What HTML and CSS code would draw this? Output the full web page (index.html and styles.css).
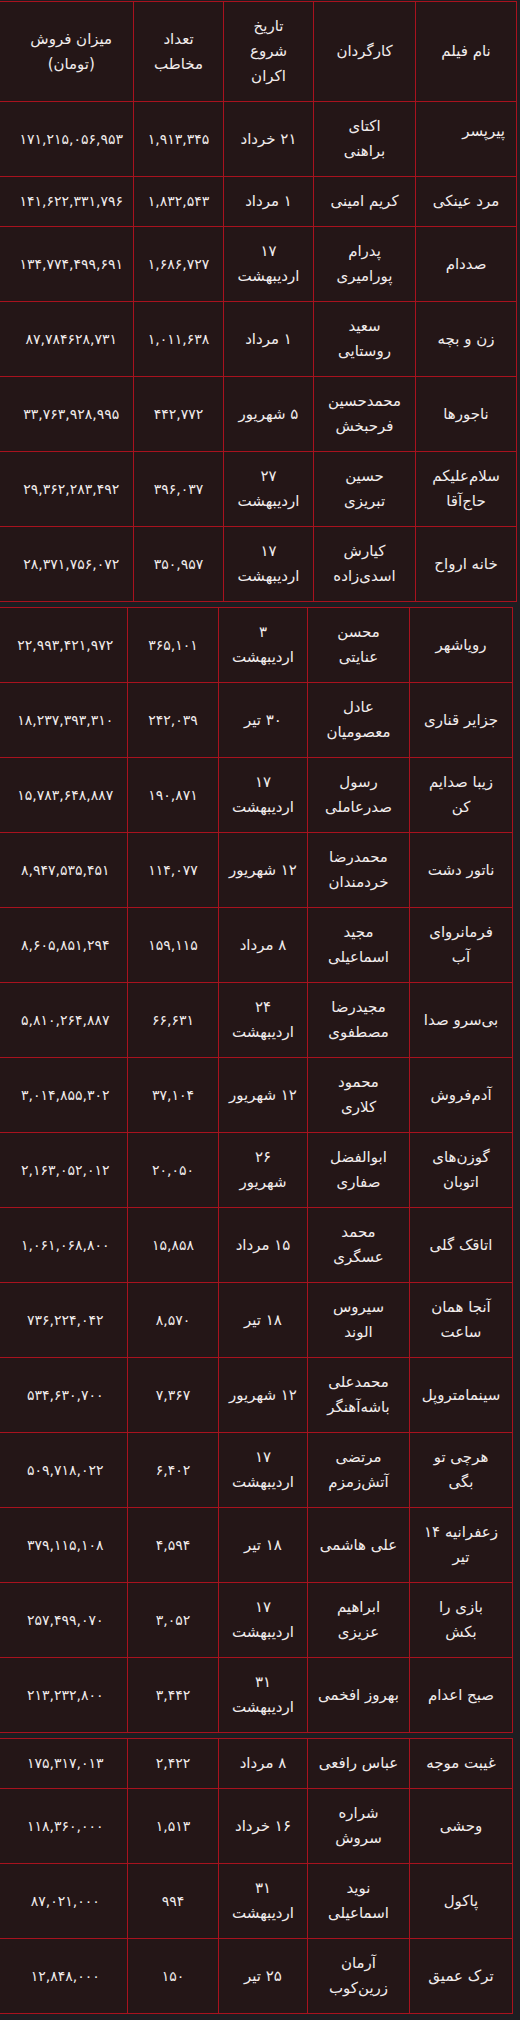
FILE: index.html
```html
<!DOCTYPE html>
<html lang="fa" dir="rtl">
<head>
<meta charset="utf-8">
<title>فروش فیلم‌ها</title>
<link rel="stylesheet" href="styles.css">
</head>
<body>
<div class="page">
  <table class="grid grid-first">
    <colgroup>
      <col class="c-name-a"><col class="c-dir"><col class="c-date-a"><col class="c-aud-a"><col class="c-sale-a">
    </colgroup>
    <tr class="head">
      <td>نام فیلم</td><td>کارگردان</td><td>تاریخ<br>شروع<br>اکران</td><td>تعداد<br>مخاطب</td><td class="sale">میزان فروش<br>(تومان)</td>
    </tr>
    <tr><td class="name-top">پیرپسر</td><td>اکتای<br>براهنی</td><td>۲۱ خرداد</td><td>۱,۹۱۳,۳۴۵</td><td class="sale">۱۷۱,۲۱۵,۰۵۶,۹۵۳</td></tr>
    <tr><td>مرد عینکی</td><td>کریم امینی</td><td>۱ مرداد</td><td>۱,۸۳۲,۵۴۳</td><td class="sale">۱۴۱,۶۲۲,۳۳۱,۷۹۶</td></tr>
    <tr><td>صددام</td><td>پدرام<br>پورامیری</td><td>۱۷<br>اردیبهشت</td><td>۱,۶۸۶,۷۲۷</td><td class="sale">۱۳۴,۷۷۴,۴۹۹,۶۹۱</td></tr>
    <tr><td>زن و بچه</td><td>سعید<br>روستایی</td><td>۱ مرداد</td><td>۱,۰۱۱,۶۳۸</td><td class="sale">۸۷,۷۸۴۶۲۸,۷۳۱</td></tr>
    <tr><td>ناجورها</td><td>محمدحسین<br>فرحبخش</td><td>۵ شهریور</td><td>۴۴۲,۷۷۲</td><td class="sale">۳۳,۷۶۳,۹۲۸,۹۹۵</td></tr>
    <tr><td>سلام‌علیکم<br>حاج‌آقا</td><td>حسین<br>تبریزی</td><td>۲۷<br>اردیبهشت</td><td>۳۹۶,۰۳۷</td><td class="sale">۲۹,۳۶۲,۲۸۳,۴۹۲</td></tr>
    <tr><td>خانه ارواح</td><td>کیارش<br>اسدی‌زاده</td><td>۱۷<br>اردیبهشت</td><td>۳۵۰,۹۵۷</td><td class="sale">۲۸,۳۷۱,۷۵۶,۰۷۲</td></tr>
  </table>

  <table class="grid grid-next">
    <colgroup>
      <col class="c-name-b"><col class="c-dir"><col class="c-date-b"><col class="c-aud-b"><col class="c-sale-b">
    </colgroup>
    <tr><td>رویاشهر</td><td>محسن<br>عنایتی</td><td>۳<br>اردیبهشت</td><td>۳۶۵,۱۰۱</td><td class="sale">۲۲,۹۹۳,۴۲۱,۹۷۲</td></tr>
    <tr><td>جزایر قناری</td><td>عادل<br>معصومیان</td><td>۳۰ تیر</td><td>۲۴۲,۰۳۹</td><td class="sale">۱۸,۲۳۷,۳۹۳,۳۱۰</td></tr>
    <tr><td>زیبا صدایم<br>کن</td><td>رسول<br>صدرعاملی</td><td>۱۷<br>اردیبهشت</td><td>۱۹۰,۸۷۱</td><td class="sale">۱۵,۷۸۳,۶۴۸,۸۸۷</td></tr>
    <tr><td>ناتور دشت</td><td>محمدرضا<br>خردمندان</td><td>۱۲ شهریور</td><td>۱۱۴,۰۷۷</td><td class="sale">۸,۹۴۷,۵۳۵,۴۵۱</td></tr>
    <tr><td>فرمانروای<br>آب</td><td>مجید<br>اسماعیلی</td><td>۸ مرداد</td><td>۱۵۹,۱۱۵</td><td class="sale">۸,۶۰۵,۸۵۱,۲۹۴</td></tr>
    <tr><td>بی‌سرو صدا</td><td>مجیدرضا<br>مصطفوی</td><td>۲۴<br>اردیبهشت</td><td>۶۶,۶۳۱</td><td class="sale">۵,۸۱۰,۲۶۴,۸۸۷</td></tr>
    <tr><td>آدم‌فروش</td><td>محمود<br>کلاری</td><td>۱۲ شهریور</td><td>۳۷,۱۰۴</td><td class="sale">۳,۰۱۴,۸۵۵,۳۰۲</td></tr>
    <tr><td>گوزن‌های<br>اتوبان</td><td>ابوالفضل<br>صفاری</td><td>۲۶<br>شهریور</td><td>۲۰,۰۵۰</td><td class="sale">۲,۱۶۳,۰۵۲,۰۱۲</td></tr>
    <tr><td>اتاقک گلی</td><td>محمد<br>عسگری</td><td>۱۵ مرداد</td><td>۱۵,۸۵۸</td><td class="sale">۱,۰۶۱,۰۶۸,۸۰۰</td></tr>
    <tr><td>آنجا همان<br>ساعت</td><td>سیروس<br>الوند</td><td>۱۸ تیر</td><td>۸,۵۷۰</td><td class="sale">۷۳۶,۲۲۴,۰۴۲</td></tr>
    <tr><td>سینمامتروپل</td><td>محمدعلی<br>باشه‌آهنگر</td><td>۱۲ شهریور</td><td>۷,۳۶۷</td><td class="sale">۵۳۴,۶۳۰,۷۰۰</td></tr>
    <tr><td>هرچی تو<br>بگی</td><td>مرتضی<br>آتش‌زمزم</td><td>۱۷<br>اردیبهشت</td><td>۶,۴۰۲</td><td class="sale">۵۰۹,۷۱۸,۰۲۲</td></tr>
    <tr><td>زعفرانیه ۱۴<br>تیر</td><td>علی هاشمی</td><td>۱۸ تیر</td><td>۴,۵۹۴</td><td class="sale">۳۷۹,۱۱۵,۱۰۸</td></tr>
    <tr><td>بازی را<br>بکش</td><td>ابراهیم<br>عزیزی</td><td>۱۷<br>اردیبهشت</td><td>۳,۰۵۲</td><td class="sale">۲۵۷,۴۹۹,۰۷۰</td></tr>
    <tr><td>صبح اعدام</td><td>بهروز افخمی</td><td>۳۱<br>اردیبهشت</td><td>۳,۴۴۲</td><td class="sale">۲۱۳,۲۳۲,۸۰۰</td></tr>
  </table>

  <table class="grid grid-next">
    <colgroup>
      <col class="c-name-b"><col class="c-dir"><col class="c-date-b"><col class="c-aud-b"><col class="c-sale-b">
    </colgroup>
    <tr><td>غیبت موجه</td><td>عباس رافعی</td><td>۸ مرداد</td><td>۲,۴۲۲</td><td class="sale">۱۷۵,۳۱۷,۰۱۳</td></tr>
    <tr><td>وحشی</td><td>شراره<br>سروش</td><td>۱۶ خرداد</td><td>۱,۵۱۳</td><td class="sale">۱۱۸,۳۶۰,۰۰۰</td></tr>
    <tr><td>پاکول</td><td>نوید<br>اسماعیلی</td><td>۳۱<br>اردیبهشت</td><td>۹۹۴</td><td class="sale">۸۷,۰۲۱,۰۰۰</td></tr>
    <tr><td>ترک عمیق</td><td>آرمان<br>زرین‌کوب</td><td>۲۵ تیر</td><td>۱۵۰</td><td class="sale">۱۲,۸۴۸,۰۰۰</td></tr>
  </table>
</div>
</body>
</html>
```
FILE: styles.css
```css
html, body {
  margin: 0;
  padding: 0;
  background: #1e1d21;
}

.page {
  width: 520px;
  height: 2020px;
  overflow: hidden;
  direction: rtl;
  font-family: "DejaVu Sans", "Noto Sans", sans-serif;
  font-size: 15px;
  color: #f1ecec;
}

.grid {
  border-collapse: collapse;
  table-layout: fixed;
  background: #241617;
}

.grid td {
  border: 1px solid #a8121e;
  padding: 12px 2px;
  line-height: 25px;
  text-align: center;
  vertical-align: middle;
  white-space: nowrap;
}

.grid td.sale {
  border-left: 0;
}

.grid tr:not(.head) td:nth-child(4),
.grid tr:not(.head) td:nth-child(5) {
  font-size: 14px;
  letter-spacing: -1.1px;
}

.grid-first {
  width: 517px;
  margin: 1px 3px 0 0;
}

.grid-next {
  width: 513px;
  margin: 5px 7px 0 0;
}

.c-name-a { width: 101px; }
.c-dir { width: 102px; }
.c-date-a { width: 90px; }
.c-aud-a { width: 90px; }
.c-sale-a { width: 134px; }

.c-name-b { width: 103px; }
.c-date-b { width: 89px; }
.c-aud-b { width: 91px; }
.c-sale-b { width: 128px; }

.grid-first td.sale { padding-left: 12px; }
.grid-next td.sale { padding-left: 6px; }

.grid td.name-top {
  text-align: right;
  vertical-align: top;
  padding-top: 17px;
  padding-right: 11px;
}
```
